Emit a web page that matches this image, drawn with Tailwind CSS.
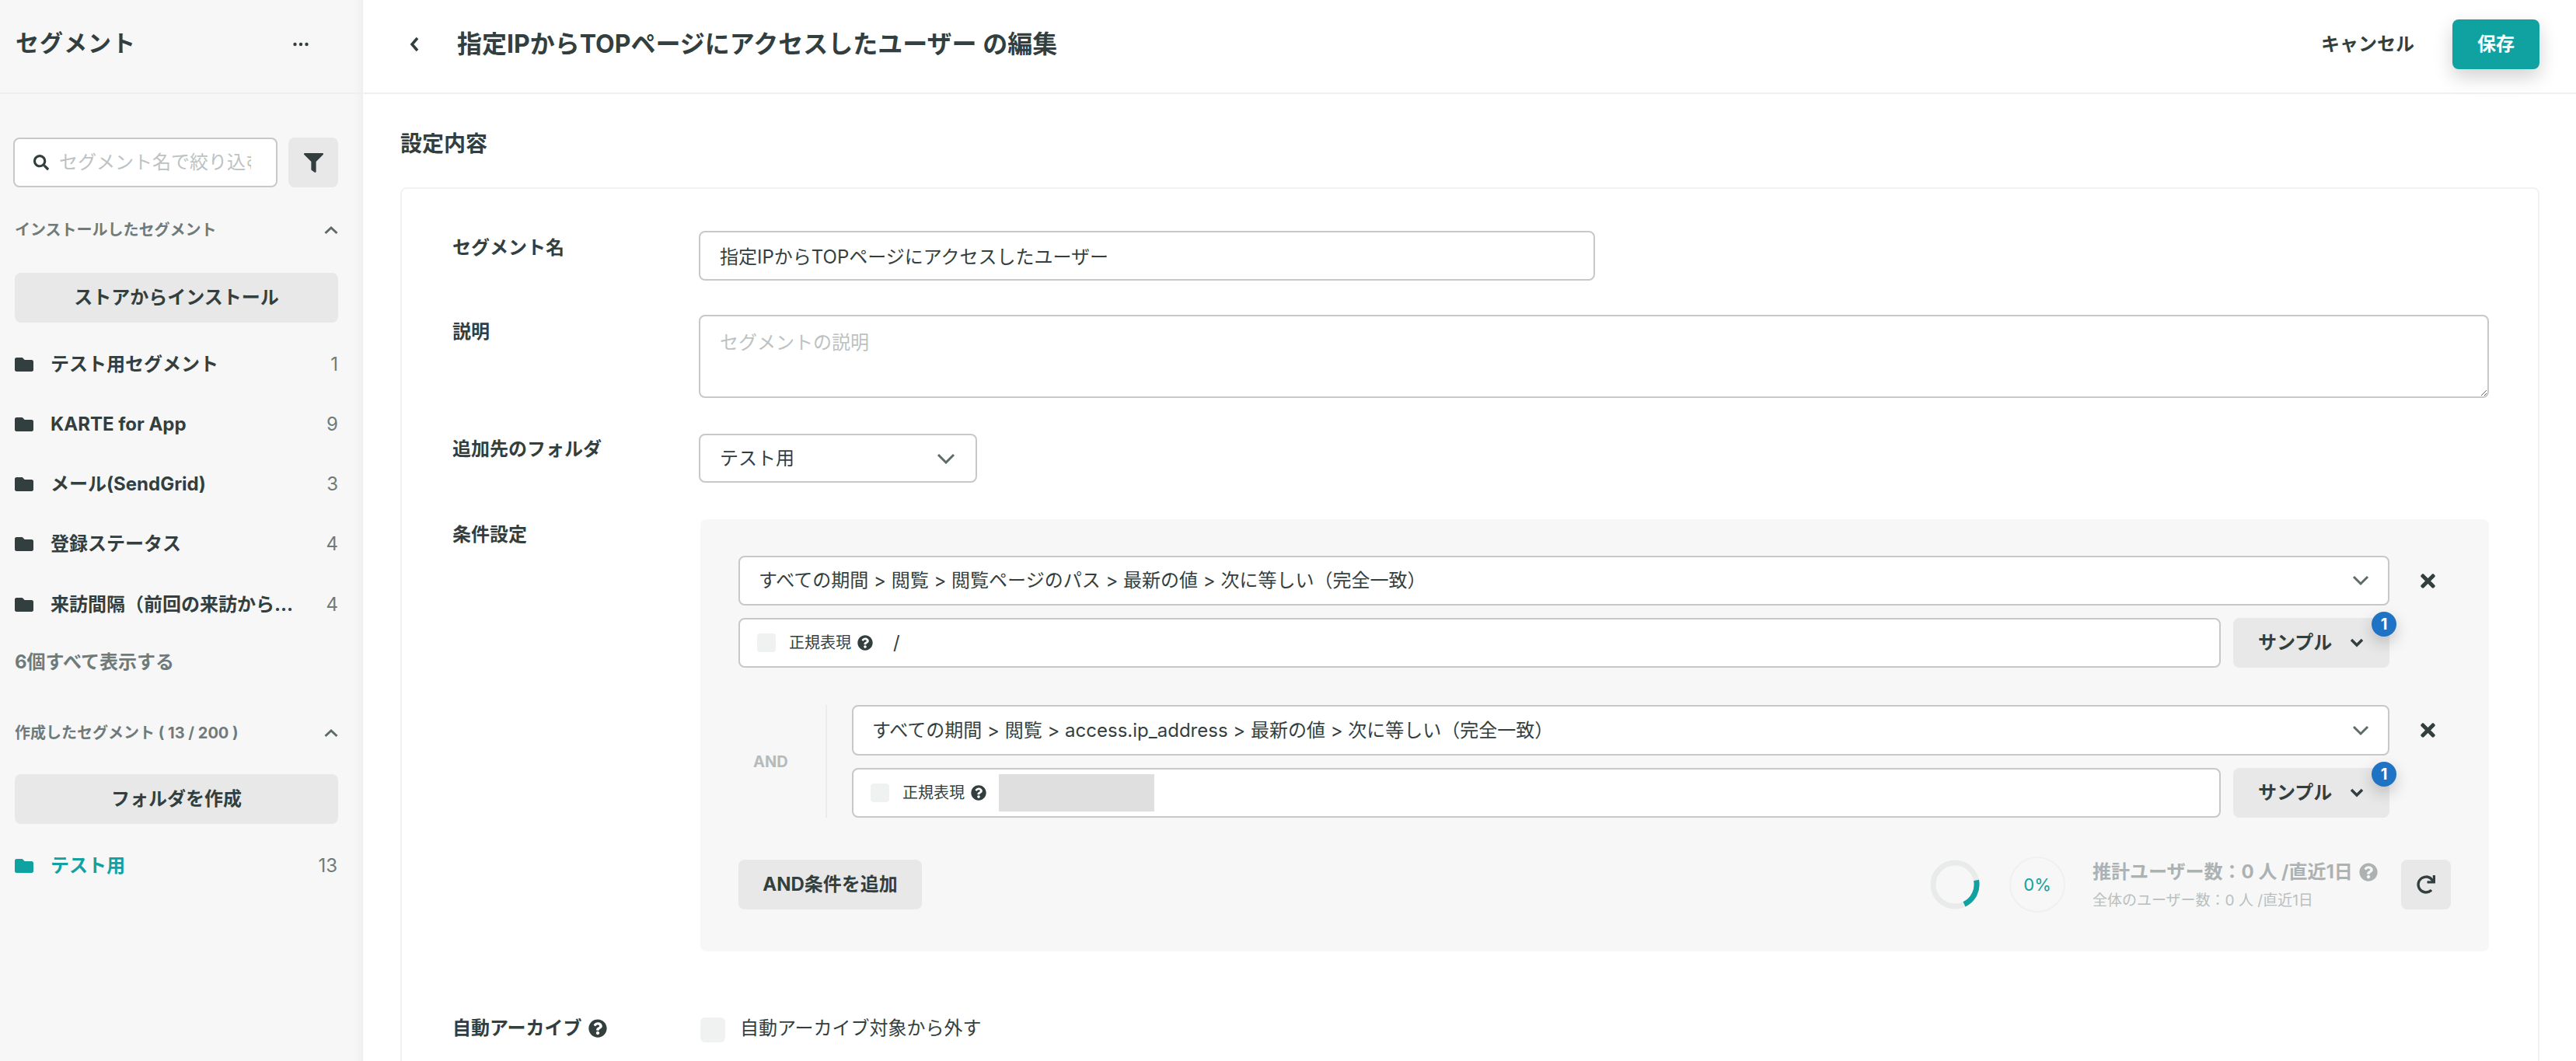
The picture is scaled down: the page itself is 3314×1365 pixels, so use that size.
<!DOCTYPE html>
<html lang="ja">
<head>
  <meta charset="UTF-8">
  <title>セグメント</title>
  <script src="https://cdn.jsdelivr.net/npm/@tailwindcss/browser@4"></script>
</head>
<body class="h-[1365px] overflow-hidden bg-white text-[#333f3f] font-['Inter','Noto_Sans_CJK_JP',sans-serif]">
  <div class="flex h-[1365px]">
    <!-- sidebar -->
    <aside class="w-[467px] shrink-0 bg-[#f7f7f7] shadow-[inset_-14px_0_14px_-14px_rgba(0,0,0,0.07)]">
      <div class="h-[121px] border-b-2 border-[#efefef] pl-[20px] pr-[70px] pb-[5px] flex items-center justify-between">
        <h1 class="mb-[3px] text-[30px] font-bold tracking-[1px]">セグメント</h1>
        <svg class="w-[20px] h-[6px]" viewBox="0 0 20 6" fill="#333f3f"><circle cx="2.5" cy="3" r="2.2"/><circle cx="10" cy="3" r="2.2"/><circle cx="17.5" cy="3" r="2.2"/></svg>
      </div>

      <div class="pl-[17px] pr-[32px] pt-[56px] flex gap-[14px]">
        <div class="w-[340px] h-[64px] bg-white border-2 border-[#c8c8c8] rounded-[8px] flex items-center pl-[24px]">
          <svg class="w-[20px] h-[20px] shrink-0 mr-[13px]" viewBox="0 0 512 512" fill="#333f3f"><path d="M505 442.7L405.3 343c-4.5-4.5-10.6-7-17-7H372c27.6-35.3 44-79.7 44-128C416 93.1 322.9 0 208 0S0 93.1 0 208s93.1 208 208 208c48.3 0 92.7-16.4 128-44v16.3c0 6.4 2.5 12.5 7 17l99.7 99.7c9.4 9.4 24.6 9.4 33.9 0l28.3-28.3c9.4-9.4 9.4-24.6.1-34zM208 336c-70.7 0-128-57.2-128-128 0-70.7 57.2-128 128-128 70.7 0 128 57.2 128 128 0 70.7-57.2 128-128 128z"/></svg>
          <input class="w-[247px] text-[24px] outline-none placeholder:text-[#bcc2c2]" placeholder="セグメント名で絞り込む">
        </div>
        <button class="w-[64px] h-[64px] bg-[#e8e8e8] rounded-[8px] flex items-center justify-center">
          <svg class="w-[25px] h-[25px]" viewBox="0 0 512 512" fill="#333f3f"><path d="M487.976 0H24.028C2.71 0-8.047 25.866 7.058 40.971L192 225.941V432c0 7.831 3.821 15.17 10.237 19.662l80 55.98C298.02 518.69 320 507.493 320 487.98V225.941l184.947-184.97C520.021 25.896 509.338 0 487.976 0z"/></svg>
        </button>
      </div>

      <div class="pl-[19px] pr-[32px]">
        <div class="mt-[36px] h-[38px] flex items-center justify-between text-[#6f7b7b]">
          <span class="text-[20px] font-bold">インストールしたセグメント</span>
          <svg class="w-[18px] h-[12px]" viewBox="0 0 18 12" fill="none" stroke="#5f6b6b" stroke-width="3"><path d="M1.5 10L9 3l7.5 7"/></svg>
        </div>
        <button class="mt-[36px] w-full h-[64px] bg-[#e8e8e8] rounded-[8px] text-[24px] font-bold">ストアからインストール</button>

        <ul class="mt-[13px]">
          <li class="h-[77.25px] pt-[4px] flex items-center">
            <svg class="w-[24px] h-[24px] shrink-0" viewBox="0 0 512 512" fill="#333f3f"><path d="M464 128H272l-64-64H48C21.49 64 0 85.49 0 112v288c0 26.51 21.49 48 48 48h416c26.51 0 48-21.49 48-48V176c0-26.51-21.49-48-48-48z"/></svg>
            <span class="ml-[22px] text-[24px] font-bold">テスト用セグメント</span>
            <span class="ml-auto text-[24px] text-[#6f7b7b]">1</span>
          </li>
          <li class="h-[77.25px] pt-[4px] flex items-center">
            <svg class="w-[24px] h-[24px] shrink-0" viewBox="0 0 512 512" fill="#333f3f"><path d="M464 128H272l-64-64H48C21.49 64 0 85.49 0 112v288c0 26.51 21.49 48 48 48h416c26.51 0 48-21.49 48-48V176c0-26.51-21.49-48-48-48z"/></svg>
            <span class="ml-[22px] text-[24px] font-bold">KARTE for App</span>
            <span class="ml-auto text-[24px] text-[#6f7b7b]">9</span>
          </li>
          <li class="h-[77.25px] pt-[4px] flex items-center">
            <svg class="w-[24px] h-[24px] shrink-0" viewBox="0 0 512 512" fill="#333f3f"><path d="M464 128H272l-64-64H48C21.49 64 0 85.49 0 112v288c0 26.51 21.49 48 48 48h416c26.51 0 48-21.49 48-48V176c0-26.51-21.49-48-48-48z"/></svg>
            <span class="ml-[22px] text-[24px] font-bold">メール(SendGrid)</span>
            <span class="ml-auto text-[24px] text-[#6f7b7b]">3</span>
          </li>
          <li class="h-[77.25px] pt-[4px] flex items-center">
            <svg class="w-[24px] h-[24px] shrink-0" viewBox="0 0 512 512" fill="#333f3f"><path d="M464 128H272l-64-64H48C21.49 64 0 85.49 0 112v288c0 26.51 21.49 48 48 48h416c26.51 0 48-21.49 48-48V176c0-26.51-21.49-48-48-48z"/></svg>
            <span class="ml-[22px] text-[24px] font-bold">登録ステータス</span>
            <span class="ml-auto text-[24px] text-[#6f7b7b]">4</span>
          </li>
          <li class="h-[77.25px] pt-[4px] flex items-center">
            <svg class="w-[24px] h-[24px] shrink-0" viewBox="0 0 512 512" fill="#333f3f"><path d="M464 128H272l-64-64H48C21.49 64 0 85.49 0 112v288c0 26.51 21.49 48 48 48h416c26.51 0 48-21.49 48-48V176c0-26.51-21.49-48-48-48z"/></svg>
            <span class="ml-[22px] text-[24px] font-bold">来訪間隔（前回の来訪から...</span>
            <span class="ml-auto text-[24px] text-[#6f7b7b]">4</span>
          </li>
        </ul>
        <div class="h-[72px] pt-[4px] flex items-center text-[24px] font-bold text-[#6f7b7b]">6個すべて表示する</div>

        <div class="mt-[38px] h-[38px] flex items-center justify-between text-[#6f7b7b]">
          <span class="text-[20px] font-bold">作成したセグメント ( 13 / 200 )</span>
          <svg class="w-[18px] h-[12px]" viewBox="0 0 18 12" fill="none" stroke="#5f6b6b" stroke-width="3"><path d="M1.5 10L9 3l7.5 7"/></svg>
        </div>
        <button class="mt-[34px] w-full h-[64px] bg-[#e8e8e8] rounded-[8px] text-[24px] font-bold">フォルダを作成</button>
        <div class="mt-[19px] h-[70px] flex items-center text-[#10a2a0]">
          <svg class="w-[24px] h-[24px] shrink-0" viewBox="0 0 512 512" fill="#10a2a0"><path d="M464 128H272l-64-64H48C21.49 64 0 85.49 0 112v288c0 26.51 21.49 48 48 48h416c26.51 0 48-21.49 48-48V176c0-26.51-21.49-48-48-48z"/></svg>
          <span class="ml-[22px] text-[24px] font-bold">テスト用</span>
          <span class="ml-auto mr-[1px] text-[24px] text-[#6f7b7b]">13</span>
        </div>
      </div>
    </aside>

    <!-- main -->
    <main class="flex-1 min-w-0">
      <header class="h-[121px] border-b-2 border-[#f0f0f0] flex items-center pl-[59px] pr-[47px] pb-[5px]">
        <svg class="w-[14px] h-[22px]" viewBox="0 0 14 22" fill="none" stroke="#333f3f" stroke-width="3.5"><path d="M11 3L4 11l7 8"/></svg>
        <h2 class="ml-[48px] text-[32px] font-bold">指定IPからTOPページにアクセスしたユーザー の編集</h2>
        <span class="ml-auto text-[24px] font-bold">キャンセル</span>
        <button class="ml-[49px] w-[112px] h-[64px] bg-[#10a2a0] text-white text-[24px] font-bold rounded-[8px] shadow-[0_10px_24px_rgba(0,0,0,0.18)]">保存</button>
      </header>

      <section class="pl-[48px] pr-[47px]">
        <h3 class="mt-[42px] h-[44px] flex items-center text-[28px] font-bold">設定内容</h3>
        <div class="mt-[34px] h-[1200px] border-2 border-[#f2f2f2] rounded-[8px] pl-[65px] pr-[63px] pt-[54px]">
          <!-- name -->
          <div class="flex">
            <label class="w-[317px] shrink-0 text-[24px] font-bold pt-[4px]">セグメント名</label>
            <input class="w-[1153px] h-[64px] border-2 border-[#c8c8c8] rounded-[8px] px-[25px] pb-[2px] text-[24px] outline-none" value="指定IPからTOPページにアクセスしたユーザー">
          </div>
          <!-- description -->
          <div class="flex mt-[44px]">
            <label class="w-[317px] shrink-0 text-[24px] font-bold pt-[4px]">説明</label>
            <textarea class="flex-1 h-[107px] border-2 border-[#c8c8c8] rounded-[8px] px-[25px] py-[16px] text-[24px] outline-none placeholder:text-[#bcc2c2]" placeholder="セグメントの説明"></textarea>
          </div>
          <!-- folder -->
          <div class="flex mt-[46px]">
            <label class="w-[317px] shrink-0 text-[24px] font-bold pt-[2px]">追加先のフォルダ</label>
            <div class="w-[358px] h-[63px] border-2 border-[#c8c8c8] rounded-[8px] pl-[25px] pr-[26px] flex items-center justify-between text-[24px]">
              <span>テスト用</span>
              <svg class="w-[24px] h-[14px]" viewBox="0 0 24 14" fill="none" stroke="#5f6b6b" stroke-width="3"><path d="M2 2l10 10L22 2"/></svg>
            </div>
          </div>
          <!-- conditions -->
          <div class="flex mt-[47px]">
            <label class="w-[317px] shrink-0 text-[24px] font-bold pt-[2px]">条件設定</label>
            <div class="flex-1 h-[556px] ml-[2px] bg-[#f7f7f7] rounded-[8px] pl-[49px] pt-[47px]">
              <!-- first condition -->
              <div class="flex items-center">
                <div class="flex-1 h-[64px] bg-white border-2 border-[#c8c8c8] rounded-[8px] pl-[24px] pr-[24px] flex items-center justify-between text-[24px]">
                  <span>すべての期間 &gt; 閲覧 &gt; 閲覧ページのパス &gt; 最新の値 &gt; 次に等しい（完全一致）</span>
                  <svg class="w-[22px] h-[14px]" viewBox="0 0 22 14" fill="none" stroke="#5f6b6b" stroke-width="3"><path d="M2 2l9 9 9-9"/></svg>
                </div>
                <div class="w-[128px] shrink-0 pl-[40px]">
                  <svg class="w-[19px] h-[27px]" viewBox="0 0 352 512" fill="#333f3f"><path d="M242.72 256l100.07-100.07c12.28-12.28 12.28-32.19 0-44.48l-22.24-22.24c-12.28-12.28-32.19-12.28-44.48 0L176 189.28 75.93 89.21c-12.28-12.28-32.19-12.28-44.48 0L9.21 111.45c-12.28 12.28-12.28 32.19 0 44.48L109.28 256 9.21 356.07c-12.28 12.28-12.28 32.19 0 44.48l22.24 22.24c12.28 12.28 32.2 12.28 44.48 0L176 322.72l100.07 100.07c12.28 12.28 32.2 12.28 44.48 0l22.24-22.24c12.28-12.28 12.28-32.19 0-44.48L242.72 256z"/></svg>
                </div>
              </div>
              <div class="flex mt-[16px] mr-[128px] gap-[16px]">
                <div class="flex-1 h-[64px] bg-white border-2 border-[#c8c8c8] rounded-[8px] pl-[22px] flex items-center">
                  <span class="w-[24px] h-[24px] bg-[#f0f2f2] rounded-[4px]"></span>
                  <span class="ml-[17px] text-[20px]">正規表現</span>
                  <svg class="ml-[8px] w-[20px] h-[20px]" viewBox="0 0 512 512" fill="#333f3f"><path d="M504 256c0 136.997-111.043 248-248 248S8 392.997 8 256C8 119.083 119.043 8 256 8s248 111.083 248 248zM262.655 90c-54.497 0-89.255 22.957-116.549 63.758-3.536 5.286-2.353 12.415 2.715 16.258l34.699 26.31c5.205 3.947 12.621 3.008 16.665-2.122 17.864-22.658 30.113-35.797 57.303-35.797 20.429 0 45.698 13.148 45.698 32.958 0 14.976-12.363 22.667-32.534 33.976C247.128 238.528 216 254.941 216 296v4c0 6.627 5.373 12 12 12h56c6.627 0 12-5.373 12-12v-1.333c0-28.462 83.186-29.647 83.186-106.667 0-58.002-60.165-102-116.531-102zM256 338c-25.365 0-46 20.635-46 46 0 25.364 20.635 46 46 46s46-20.636 46-46c0-25.365-20.635-46-46-46z"/></svg>
                  <span class="ml-[26px] text-[24px]">/</span>
                </div>
                <button class="relative w-[201px] h-[64px] bg-[#e8e8e8] rounded-[8px] flex items-center pl-[32px] text-[24px] font-bold">
                  サンプル
                  <svg class="ml-[23px] w-[18px] h-[12px]" viewBox="0 0 18 12" fill="none" stroke="#333f3f" stroke-width="3.5"><path d="M2 2l7 7 7-7"/></svg>
                  <span class="absolute -right-[9px] -top-[8px] w-[32px] h-[32px] rounded-full bg-[#1f73c4] text-white text-[20px] font-bold flex items-center justify-center shadow-[0_8px_20px_rgba(0,0,0,0.2)]">1</span>
                </button>
              </div>

              <!-- AND condition -->
              <div class="flex mt-[48px]">
                <div class="w-[112px] shrink-0 pl-[19px] flex items-center text-[20px] font-bold text-[#b5bbbb]">AND</div>
                <div class="flex-1 min-w-0 border-l-2 border-[#ececec] pl-[32px]">
                  <div class="flex items-center">
                    <div class="flex-1 h-[65px] bg-white border-2 border-[#c8c8c8] rounded-[8px] pl-[24px] pr-[24px] flex items-center justify-between text-[24px]">
                      <span>すべての期間 &gt; 閲覧 &gt; access.ip_address &gt; 最新の値 &gt; 次に等しい（完全一致）</span>
                      <svg class="w-[22px] h-[14px]" viewBox="0 0 22 14" fill="none" stroke="#5f6b6b" stroke-width="3"><path d="M2 2l9 9 9-9"/></svg>
                    </div>
                    <div class="w-[128px] shrink-0 pl-[40px]">
                      <svg class="w-[19px] h-[27px]" viewBox="0 0 352 512" fill="#333f3f"><path d="M242.72 256l100.07-100.07c12.28-12.28 12.28-32.19 0-44.48l-22.24-22.24c-12.28-12.28-32.19-12.28-44.48 0L176 189.28 75.93 89.21c-12.28-12.28-32.19-12.28-44.48 0L9.21 111.45c-12.28 12.28-12.28 32.19 0 44.48L109.28 256 9.21 356.07c-12.28 12.28-12.28 32.19 0 44.48l22.24 22.24c12.28 12.28 32.2 12.28 44.48 0L176 322.72l100.07 100.07c12.28 12.28 32.2 12.28 44.48 0l22.24-22.24c12.28-12.28 12.28-32.19 0-44.48L242.72 256z"/></svg>
                    </div>
                  </div>
                  <div class="flex mt-[16px] mr-[128px] gap-[16px]">
                    <div class="flex-1 h-[64px] bg-white border-2 border-[#c8c8c8] rounded-[8px] pl-[22px] flex items-center">
                      <span class="w-[24px] h-[24px] bg-[#f0f2f2] rounded-[4px]"></span>
                      <span class="ml-[17px] text-[20px]">正規表現</span>
                      <svg class="ml-[8px] w-[20px] h-[20px]" viewBox="0 0 512 512" fill="#333f3f"><path d="M504 256c0 136.997-111.043 248-248 248S8 392.997 8 256C8 119.083 119.043 8 256 8s248 111.083 248 248zM262.655 90c-54.497 0-89.255 22.957-116.549 63.758-3.536 5.286-2.353 12.415 2.715 16.258l34.699 26.31c5.205 3.947 12.621 3.008 16.665-2.122 17.864-22.658 30.113-35.797 57.303-35.797 20.429 0 45.698 13.148 45.698 32.958 0 14.976-12.363 22.667-32.534 33.976C247.128 238.528 216 254.941 216 296v4c0 6.627 5.373 12 12 12h56c6.627 0 12-5.373 12-12v-1.333c0-28.462 83.186-29.647 83.186-106.667 0-58.002-60.165-102-116.531-102zM256 338c-25.365 0-46 20.635-46 46 0 25.364 20.635 46 46 46s46-20.636 46-46c0-25.365-20.635-46-46-46z"/></svg>
                      <span class="ml-[16px] w-[200px] h-[48px] bg-[#dfdfdf]"></span>
                    </div>
                    <button class="relative w-[201px] h-[64px] bg-[#e8e8e8] rounded-[8px] flex items-center pl-[32px] text-[24px] font-bold">
                      サンプル
                      <svg class="ml-[23px] w-[18px] h-[12px]" viewBox="0 0 18 12" fill="none" stroke="#333f3f" stroke-width="3.5"><path d="M2 2l7 7 7-7"/></svg>
                      <span class="absolute -right-[9px] -top-[8px] w-[32px] h-[32px] rounded-full bg-[#1f73c4] text-white text-[20px] font-bold flex items-center justify-center shadow-[0_8px_20px_rgba(0,0,0,0.2)]">1</span>
                    </button>
                  </div>
                </div>
              </div>

              <!-- footer of the panel -->
              <div class="flex items-center mt-[50px] mr-[49px]">
                <button class="w-[236px] h-[64px] bg-[#e8e8e8] rounded-[8px] text-[24px] font-bold">AND条件を追加</button>
                <svg class="ml-auto w-[64px] h-[64px]" viewBox="0 0 64 64" fill="none" stroke-width="7"><circle cx="32" cy="32" r="28" stroke="#e9ebeb"/><path d="M59.5 26.5A28 28 0 0 1 44 57.3" stroke="#10a2a0"/></svg>
                <div class="ml-[38px] w-[72px] h-[72px] rounded-full border-2 border-[#f0f0f0] flex items-center justify-center text-[22px] text-[#10a2a0]">0%</div>
                <div class="ml-[35px] w-[397px] shrink-0">
                  <div class="flex items-center h-[36px] text-[24px] font-bold text-[#acb2b2]">
                    推計ユーザー数：0 人 /直近1日
                    <svg class="ml-[8px] w-[24px] h-[24px]" viewBox="0 0 512 512" fill="#acb2b2"><path d="M504 256c0 136.997-111.043 248-248 248S8 392.997 8 256C8 119.083 119.043 8 256 8s248 111.083 248 248zM262.655 90c-54.497 0-89.255 22.957-116.549 63.758-3.536 5.286-2.353 12.415 2.715 16.258l34.699 26.31c5.205 3.947 12.621 3.008 16.665-2.122 17.864-22.658 30.113-35.797 57.303-35.797 20.429 0 45.698 13.148 45.698 32.958 0 14.976-12.363 22.667-32.534 33.976C247.128 238.528 216 254.941 216 296v4c0 6.627 5.373 12 12 12h56c6.627 0 12-5.373 12-12v-1.333c0-28.462 83.186-29.647 83.186-106.667 0-58.002-60.165-102-116.531-102zM256 338c-25.365 0-46 20.635-46 46 0 25.364 20.635 46 46 46s46-20.636 46-46c0-25.365-20.635-46-46-46z"/></svg>
                  </div>
                  <div class="mt-[5px] h-[28px] text-[19px] text-[#b9bfbf]">全体のユーザー数：0 人 /直近1日</div>
                </div>
                <button class="w-[64px] h-[64px] bg-[#e8e8e8] rounded-[8px] flex items-center justify-center">
                  <svg class="w-[24px] h-[24px]" viewBox="0 0 512 512" fill="#333f3f"><path d="M500.33 0h-47.41a12 12 0 0 0-12 12.57l4 82.76A247.42 247.42 0 0 0 256 8C119.34 8 7.9 119.53 8 256.19 8.1 393.07 119.1 504 256 504a247.1 247.1 0 0 0 166.18-63.91 12 12 0 0 0 .48-17.43l-34-34a12 12 0 0 0-16.38-.55A176 176 0 1 1 402.1 157.8l-101.53-4.87a12 12 0 0 0-12.57 12v47.41a12 12 0 0 0 12 12h200.33a12 12 0 0 0 12-12V12a12 12 0 0 0-12-12z"/></svg>
                </button>
              </div>
            </div>
          </div>
          <!-- auto archive -->
          <div class="flex mt-[81px] h-[36px]">
            <label class="w-[319px] shrink-0 flex items-center text-[24px] font-bold">
              自動アーカイブ
              <svg class="ml-[8px] w-[24px] h-[24px]" viewBox="0 0 512 512" fill="#333f3f"><path d="M504 256c0 136.997-111.043 248-248 248S8 392.997 8 256C8 119.083 119.043 8 256 8s248 111.083 248 248zM262.655 90c-54.497 0-89.255 22.957-116.549 63.758-3.536 5.286-2.353 12.415 2.715 16.258l34.699 26.31c5.205 3.947 12.621 3.008 16.665-2.122 17.864-22.658 30.113-35.797 57.303-35.797 20.429 0 45.698 13.148 45.698 32.958 0 14.976-12.363 22.667-32.534 33.976C247.128 238.528 216 254.941 216 296v4c0 6.627 5.373 12 12 12h56c6.627 0 12-5.373 12-12v-1.333c0-28.462 83.186-29.647 83.186-106.667 0-58.002-60.165-102-116.531-102zM256 338c-25.365 0-46 20.635-46 46 0 25.364 20.635 46 46 46s46-20.636 46-46c0-25.365-20.635-46-46-46z"/></svg>
            </label>
            <span class="mt-[4px] w-[32px] h-[32px] bg-[#f0f2f2] rounded-[6px]"></span>
            <span class="ml-[19px] text-[24px] leading-[36px]">自動アーカイブ対象から外す</span>
          </div>
        </div>
      </section>
    </main>
  </div>
</body>
</html>
